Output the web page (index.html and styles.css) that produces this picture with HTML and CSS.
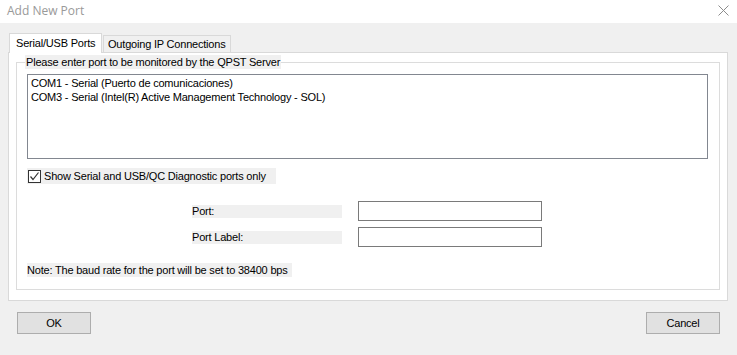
FILE: index.html
```html
<!DOCTYPE html>
<html lang="en">
<head>
    <meta charset="UTF-8">
    <title>Add New Port</title>
    <link rel="stylesheet" href="styles.css">
</head>
<body>
    <div class="titlebar">
        <span class="title">Add New Port</span>
        <svg class="close" width="11" height="11" viewBox="0 0 11 11">
            <path d="M0.5 0.5 L10.5 10.5 M10.5 0.5 L0.5 10.5" stroke="#8c8c8c" stroke-width="1" fill="none"/>
        </svg>
    </div>

    <div class="tabs">
        <div class="tab active">Serial/USB Ports</div>
        <div class="tab">Outgoing IP Connections</div>
    </div>

    <div class="panel">
        <fieldset class="group">
            <legend>Please enter port to be monitored by the QPST Server</legend>
            <div class="listbox">
                <div class="item">COM1 - Serial (Puerto de comunicaciones)</div>
                <div class="item">COM3 - Serial (Intel(R) Active Management Technology - SOL)</div>
            </div>
            <label class="check-row">
                <span class="checkbox">
                    <svg width="11" height="11" viewBox="0 0 11 11">
                        <path d="M1.5 5.5 L4 8.5 L9.5 1.5" stroke="#333" stroke-width="1.2" fill="none"/>
                    </svg>
                </span>
                <span>Show Serial and USB/QC Diagnostic ports only</span>
            </label>
            <div class="field">
                <span class="field-label">Port:</span>
                <div class="input"></div>
            </div>
            <div class="field">
                <span class="field-label">Port Label:</span>
                <div class="input"></div>
            </div>
            <div class="note">Note: The baud rate for the port will be set to 38400 bps</div>
        </fieldset>
    </div>

    <div class="buttons">
        <button class="btn">OK</button>
        <button class="btn">Cancel</button>
    </div>
</body>
</html>
```

FILE: styles.css
```css
* {
    margin: 0;
    padding: 0;
    box-sizing: border-box;
}

body {
    width: 737px;
    height: 355px;
    background-color: #f0f0f0;
    font-family: 'Liberation Sans', Arial, sans-serif;
    font-size: 11px;
    letter-spacing: -0.2px;
    color: #000;
    overflow: hidden;
}

.titlebar {
    height: 23px;
    background: #fff;
    display: flex;
    justify-content: space-between;
    align-items: center;
    padding: 0 8px 2px 7px;
}

.title {
    font-family: 'Open Sans', 'Noto Sans', sans-serif;
    font-size: 12px;
    letter-spacing: 0;
    color: #999;
}

.close {
    display: block;
}

.tabs {
    display: flex;
    align-items: flex-end;
    margin-top: 10px;
    padding-left: 9px;
    height: 19px;
}

.tab {
    height: 17px;
    padding: 0 4px;
    border: 1px solid #d9d9d9;
    border-bottom: none;
    background: #f0f0f0;
    line-height: 16px;
    margin-left: 1px;
    white-space: nowrap;
}

.tab.active {
    height: 20px;
    width: 93px;
    margin-left: 0;
    margin-bottom: -1px;
    padding: 0 6px;
    line-height: 18px;
    background: #fff;
    position: relative;
    z-index: 1;
}

.panel {
    margin: 0 9px 0 8px;
    background: #fff;
    border: 1px solid #d9d9d9;
    padding: 2px 7px 10px 7px;
}

.group {
    border: 1px solid #dcdcdc;
    min-width: 0;
    padding: 0 11px 12px 10px;
}

.group legend {
    margin-left: -2px;
    padding: 0 1px;
    background: #f0f0f0;
    line-height: 14px;
}

.listbox {
    margin-top: 5px;
    height: 85px;
    border: 1px solid #828790;
    padding: 1px 3px;
    line-height: 14px;
}

.check-row {
    display: flex;
    align-items: center;
    gap: 3px;
    margin-top: 9px;
    width: 249px;
    height: 16px;
    background: #f0f0f0;
    padding-left: 1px;
}

.checkbox {
    width: 13px;
    height: 13px;
    border: 1px solid #333;
    background: #fff;
    display: flex;
    align-items: center;
    justify-content: center;
}

.checkbox svg {
    display: block;
}

.field {
    display: flex;
    align-items: center;
    margin-top: 6px;
    padding-left: 165px;
}

.check-row + .field {
    margin-top: 17px;
}

.field-label {
    width: 150px;
    height: 13px;
    line-height: 13px;
    background: #f0f0f0;
}

.input {
    margin-left: 16px;
    width: 184px;
    height: 20px;
    border: 1px solid #7a7a7a;
    background: #fff;
}

.note {
    margin-top: 16px;
    width: 265px;
    height: 14px;
    line-height: 14px;
    white-space: nowrap;
    background: #f0f0f0;
}

.buttons {
    display: flex;
    justify-content: space-between;
    padding: 11px 17px 0 17px;
}

.btn {
    width: 74px;
    height: 22px;
    border: 1px solid #adadad;
    background: #e1e1e1;
    font-family: 'Liberation Sans', Arial, sans-serif;
    font-size: 11px;
    letter-spacing: -0.2px;
    color: #000;
}
```
